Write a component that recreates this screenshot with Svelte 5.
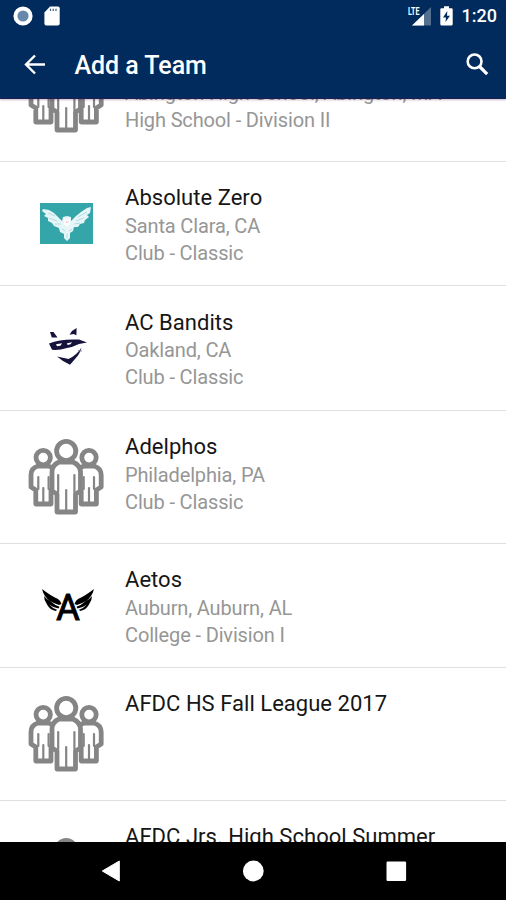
<!-- Team picker: a searchable list of teams under the app bar. -->
<script lang="ts">
    type Logo = "group" | "owl" | "bandit" | "wings";

    interface Team {
        name?: string;
        location?: string;
        division?: string;
        logo: Logo;
    }

    const teams: Team[] = [
        {
            location: "Abington High School, Abington, MA",
            division: "High School - Division II",
            logo: "group",
        },
        {
            name: "Absolute Zero",
            location: "Santa Clara, CA",
            division: "Club - Classic",
            logo: "owl",
        },
        {
            name: "AC Bandits",
            location: "Oakland, CA",
            division: "Club - Classic",
            logo: "bandit",
        },
        {
            name: "Adelphos",
            location: "Philadelphia, PA",
            division: "Club - Classic",
            logo: "group",
        },
        {
            name: "Aetos",
            location: "Auburn, Auburn, AL",
            division: "College - Division I",
            logo: "wings",
        },
        { name: "AFDC HS Fall League 2017", logo: "group" },
        { name: "AFDC Jrs. High School Summer", logo: "group" },
    ];
</script>

{#snippet groupLogo()}
    <svg class="group-logo" viewBox="0 0 76 78" fill="none" stroke="#858585" stroke-width="4.8" stroke-linejoin="round" stroke-linecap="round">
        <circle cx="15.2" cy="19.6" r="7.2" />
        <path d="M10 28Q3 30 3 37V49L7.8 52V66H23V52L27 49V35Q25 29 20 28Z" />
        <path d="M10.3 39V51M15.3 50V65M20.6 39V51" stroke-width="2.2" />
        <circle cx="61" cy="19.6" r="7.2" />
        <path d="M56 28Q50 30 49 37V49L53.2 52V66H68.4V52L73.2 49V37Q73 30 66 28Z" />
        <path d="M55.7 39V51M61 50V65M66 39V51" stroke-width="2.2" />
        <circle cx="38.2" cy="13" r="9.6" fill="#fff" />
        <path d="M31 24Q24 27 24 34V53L29 56V74H47.5V56L52.5 53V34Q52 27 45 24Z" fill="#fff" />
        <path d="M30.2 37V54M38.2 52V73M46.4 37V54" stroke-width="2.2" />
    </svg>
{/snippet}

{#snippet owlLogo()}
    <svg width="53" height="41" viewBox="0 0 53 41">
        <rect width="53" height="41" fill="#34a5a9" />
        <path
            d="M3 6L9 7 14 10 18 14 22 18 23 14 27 13 31 14 31 18 36 13 41 9 47 5 51 4 50 10 47 12 49 14 45 17 44 20 40 21 38 24 34 24 33 28 30 30 30 35 27 38 24 35 24 31 20 29 19 25 14 23 12 20 8 18 8 15 4 13 6 11 2 8Z"
            fill="#e6f5f7"
        />
        <path
            d="M8 10L15 13M9 15L17 18M15 21L21 21M47 9L38 14M44 15L36 18M40 20L34 21M22 26L25 28M32 26L29 28M27 31V35"
            stroke="#a5d6dc"
            stroke-width=".8"
            fill="none"
        />
        <path d="M24 15L27 17 30 15 30 21 27 24 24 21Z" fill="#fff" />
        <path d="M26 18L27 20 28.5 18" stroke="#d7b8bc" stroke-width=".7" fill="none" />
    </svg>
{/snippet}

{#snippet banditLogo()}
    <svg class="bandit-logo" width="38" height="38" viewBox="0 0 38 38">
        <g fill="#15123c">
            <path d="M1 2L4.5 2 8.5 7.4 2.8 7.4Z" />
            <path d="M27.6 -2L27.4 5.2 24.5 4 20.5 4.8 23 1Z" />
            <path d="M0 13.5Q12 8.6 30 9.6L38 12.5 30 14Q24 17 18 18 10 20.5 3 19.8Z" />
            <path d="M8 26.5L19.5 29Q28 25 32.5 17.5 31 24 26 29L21 34.8 14 31Z" />
        </g>
        <path d="M7 14.3L13 13.2 11.5 15.8 8 16.2ZM18 13.2L23 12.2 21.5 14.3 18.5 15Z" fill="#fff" />
        <path d="M29 20.5L33 21" stroke="#858393" stroke-width="1" />
    </svg>
{/snippet}

{#snippet wingsLogo()}
    <svg class="wings-logo" width="52" height="34" viewBox="0 0 52 34">
        <path id="wing" d="M0 1Q9 8 16 11 19 13 19.5 16L17 17Q12 15.5 8 13 13 17.3 17.5 18.8L16.5 20.5Q11 19.5 7 16.5 11 20.7 15 21.8L14 23Q8 22 5 16.5 2 12.5 2 8 5 12 8 13 2 9 0 1Z" />
        <use href="#wing" transform="translate(52 0) scale(-1 1)" />
        <text x="26" y="32.3" text-anchor="middle" stroke="#000" stroke-width="1">A</text>
    </svg>
{/snippet}

<div class="screen">
    <header>
        <div class="status-bar">
            <svg width="20" height="20" viewBox="0 0 20 20">
                <circle cx="10" cy="10" r="7.6" fill="#6788ab" stroke="#fff" stroke-width="4" />
            </svg>
            <svg class="sd-card" width="16" height="20" viewBox="0 0 16 20">
                <path d="M6 .5H14Q15.7 .5 15.7 2.2V17.5Q15.7 19.5 13.7 19.5H2.3Q.4 19.5 .4 17.5V6.5Z" fill="#fff" />
                <path d="M6.5 2.8V5M9.2 2.8V5M12 2.8V5" stroke="#415c80" stroke-width="1.2" />
            </svg>
            <svg class="signal" width="24" height="20" viewBox="0 0 24 20">
                <path d="M23 1V19.5H4Z" fill="#53718f" />
                <path d="M16 8V19.5H4Z" fill="#fff" />
                <text x="0" y="8.5" textLength="11.5" lengthAdjust="spacingAndGlyphs">LTE</text>
            </svg>
            <svg class="battery" width="13" height="20" viewBox="0 0 13 20">
                <path d="M4 .3H9V2.2H11.5Q12.7 2.2 12.7 3.5V18Q12.7 19.6 11.3 19.6H1.7Q.3 19.6 .3 18V3.5Q.3 2.2 1.5 2.2H4Z" fill="#fff" />
                <path d="M7.3 5L3 11.5H6L5.5 16 10 9.7H7Z" fill="#002b5c" />
            </svg>
            <span class="clock">1:20</span>
        </div>
        <div class="app-bar">
            <button type="button" aria-label="Back">
                <svg width="22" height="20" viewBox="0 0 22 20" fill="none" stroke="#fff" stroke-width="2.4">
                    <path d="M21 9.5H3M11 .5L2 9.5 11 18.5" />
                </svg>
            </button>
            <h1>Add a Team</h1>
            <button type="button" aria-label="Search">
                <svg width="23" height="23" viewBox="0 0 23 23" fill="none" stroke="#fff">
                    <circle cx="8.6" cy="8.4" r="6.9" stroke-width="2.6" />
                    <path d="M13.5 13.5L21.2 21.2" stroke-width="3.2" />
                </svg>
            </button>
        </div>
    </header>

    <main>
        <ul>
            {#each teams as team}
                <li>
                    <div class="logo">
                        {#if team.logo === "owl"}
                            {@render owlLogo()}
                        {:else if team.logo === "bandit"}
                            {@render banditLogo()}
                        {:else if team.logo === "wings"}
                            {@render wingsLogo()}
                        {:else}
                            {@render groupLogo()}
                        {/if}
                    </div>
                    <div class="details">
                        <h2>{team.name ?? ""}</h2>
                        {#if team.location}
                            <p>{team.location}</p>
                        {/if}
                        {#if team.division}
                            <p>{team.division}</p>
                        {/if}
                    </div>
                </li>
            {/each}
        </ul>
    </main>

    <nav>
        <svg width="22" height="22" viewBox="0 0 22 22">
            <path d="M20.3 1V21L3.3 11Z" fill="#fff" stroke="#fff" stroke-width="1" stroke-linejoin="round" />
        </svg>
        <svg width="22" height="22" viewBox="0 0 22 22">
            <circle cx="11.3" cy="11" r="10.4" fill="#fff" />
        </svg>
        <svg width="22" height="22" viewBox="0 0 22 22">
            <rect x="1.5" y="1.5" width="19.6" height="19.4" rx="1.2" fill="#fff" />
        </svg>
    </nav>
</div>

<style>
    .screen {
        display: flex;
        flex-direction: column;
        width: 506px;
        height: 900px;
        overflow: hidden;
        background: #fff;
        font-family: Roboto, "Liberation Sans", sans-serif;
    }

    svg {
        display: block;
        flex: none;
        overflow: visible;
    }

    header {
        flex: none;
        height: 99px;
        background: #002b5c;
        color: #fff;
        border-bottom: 1px solid #1c1f52;
        box-sizing: border-box;
        box-shadow: 0 1px 2px rgba(60, 20, 70, 0.3);
        z-index: 1;
    }

    .status-bar {
        display: flex;
        align-items: center;
        height: 31px;
        padding: 0 9px 0 13px;
    }

    .sd-card {
        margin-left: 11px;
    }

    .signal {
        margin-left: auto;
    }

    .signal text {
        font-size: 10px;
        font-weight: 700;
        fill: #fff;
    }

    .battery {
        margin-left: 8px;
    }

    .clock {
        margin-left: 9px;
        font-size: 18px;
        font-weight: 500;
    }

    .app-bar {
        display: flex;
        align-items: center;
        height: 67px;
        padding: 0 17px 0 24px;
    }

    .app-bar button {
        padding: 0;
        border: 0;
        background: none;
    }

    h1 {
        flex: 1;
        margin: 3px 0 0 28.5px;
        font-size: 25px;
        font-weight: 500;
        line-height: 30px;
        letter-spacing: -0.05px;
    }

    main {
        flex: 1;
        min-height: 0;
        overflow: hidden;
    }

    ul {
        margin: -70px 0 0;
        padding: 0;
        list-style: none;
    }

    li {
        display: flex;
        min-height: 123.3px;
        border-bottom: 1px solid #e0e0e0;
    }

    li:last-child {
        min-height: 151px;
    }

    .logo {
        flex: none;
        display: flex;
        align-items: center;
        justify-content: center;
        width: 133px;
        margin-right: -8px;
    }

    .group-logo {
        width: 76px;
        height: 78px;
        margin: 27px 0.5px 27px 0;
    }

    .bandit-logo {
        margin: 3px 0 0 3px;
    }

    .wings-logo {
        margin-left: 2px;
    }

    .wings-logo text {
        font-size: 36px;
        font-weight: 400;
    }

    .details {
        padding-top: 22.4px;
        white-space: nowrap;
    }

    h2,
    p {
        margin: 0;
        font-weight: 400;
    }

    h2 {
        min-height: 28px;
        font-size: 22px;
        line-height: 28px;
        letter-spacing: 0.03px;
        color: #161616;
    }

    p {
        position: relative;
        top: 0.6px;
        font-size: 20px;
        line-height: 27px;
        letter-spacing: -0.14px;
        color: #969696;
    }

    nav {
        flex: none;
        display: flex;
        align-items: center;
        justify-content: center;
        gap: 121px;
        height: 58px;
        background: #000;
    }
</style>
